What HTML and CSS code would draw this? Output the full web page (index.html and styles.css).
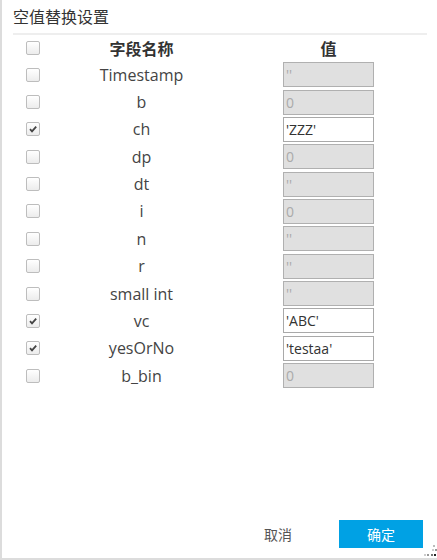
FILE: index.html
```html
<!DOCTYPE html>
<html lang="zh">
<head>
<meta charset="utf-8">
<title>空值替换设置</title>
<link rel="stylesheet" href="styles.css">
</head>
<body>
<div class="dialog">
  <div class="title">空值替换设置</div>
  <div class="table">
    <div class="row head">
      <span class="cb"></span>
      <span class="name">字段名称</span>
      <span class="name">值</span>
    </div>
    <div class="row"><span class="cb"></span><span class="name">Timestamp</span><input class="val" value="''" disabled></div>
    <div class="row"><span class="cb"></span><span class="name">b</span><input class="val" value="0" disabled></div>
    <div class="row"><span class="cb on"><svg viewBox="0 0 12 12"><path d="M3 6.2 L5 8.3 L9.2 3.6" /></svg></span><span class="name">ch</span><input class="val" value="'ZZZ'"></div>
    <div class="row"><span class="cb"></span><span class="name">dp</span><input class="val" value="0" disabled></div>
    <div class="row"><span class="cb"></span><span class="name">dt</span><input class="val" value="''" disabled></div>
    <div class="row"><span class="cb"></span><span class="name">i</span><input class="val" value="0" disabled></div>
    <div class="row"><span class="cb"></span><span class="name">n</span><input class="val" value="''" disabled></div>
    <div class="row"><span class="cb"></span><span class="name">r</span><input class="val" value="''" disabled></div>
    <div class="row"><span class="cb"></span><span class="name">small int</span><input class="val" value="''" disabled></div>
    <div class="row"><span class="cb on"><svg viewBox="0 0 12 12"><path d="M3 6.2 L5 8.3 L9.2 3.6" /></svg></span><span class="name">vc</span><input class="val" value="'ABC'"></div>
    <div class="row"><span class="cb on"><svg viewBox="0 0 12 12"><path d="M3 6.2 L5 8.3 L9.2 3.6" /></svg></span><span class="name">yesOrNo</span><input class="val" value="'testaa'"></div>
    <div class="row"><span class="cb"></span><span class="name">b_bin</span><input class="val" value="0" disabled></div>
  </div>
  <div class="footer">
    <button class="btn cancel">取消</button>
    <button class="btn ok">确定</button>
  </div>
  <svg class="grip" viewBox="0 0 14 14" width="14" height="14">
    <rect x="10" y="1" width="2" height="2" fill="#bbb"/>
    <rect x="9" y="5" width="2" height="2" fill="#ccc"/>
    <rect x="12" y="5" width="2" height="2" fill="#999"/>
    <rect x="1" y="10" width="2" height="2" fill="#ccc"/>
    <rect x="4" y="10" width="2" height="2" fill="#999"/>
    <rect x="8" y="10" width="2" height="2" fill="#777"/>
    <rect x="11" y="10" width="2" height="2" fill="#222"/>
  </svg>
</div>
</body>
</html>
```

FILE: styles.css
```css
html, body {
  margin: 0;
  padding: 0;
  background: #fff;
}
body {
  font-family: "Open Sans", "Noto Sans CJK SC", sans-serif;
  color: #444;
}
.dialog {
  position: relative;
  box-sizing: border-box;
  height: 560px;
  width: 437px;
  border-left: 2px solid #dcdcdc;
  border-bottom: 2px solid #dcdcdc;
  padding: 0 10px 0 11px;
  display: flex;
  flex-direction: column;
}
.title {
  height: 33px;
  line-height: 33px;
  font-size: 16px;
  color: #333;
  font-family: "Noto Sans CJK SC", sans-serif;
  border-bottom: 2px solid #eeeeee;
}
.table {
  flex: 1;
}
.row {
  display: grid;
  grid-template-columns: 40px 177px 197px;
  height: 27.36px;
  align-items: center;
  justify-items: center;
}
.row.head {
  height: 26px;
}
.name {
  font-size: 16px;
  line-height: 20px;
  color: #444;
  white-space: nowrap;
}
.head .name {
  font-weight: bold;
  color: #333;
  font-family: "Noto Sans CJK SC", sans-serif;
}
.cb {
  box-sizing: border-box;
  width: 14px;
  height: 14px;
  border: 1px solid #bdbdbd;
  border-radius: 2px;
  background: linear-gradient(#ffffff, #ececec);
  display: flex;
  align-items: center;
  justify-content: center;
}
.cb svg {
  width: 12px;
  height: 12px;
}
.cb svg path {
  fill: none;
  stroke: #444;
  stroke-width: 1.8;
}
.val {
  box-sizing: border-box;
  width: 91px;
  height: 25px;
  margin: 0;
  padding: 0 2px;
  border: 1px solid #a9a9a9;
  background: #fff;
  font-family: "Open Sans", sans-serif;
  font-size: 14px;
  color: #333;
  outline: none;
}
.val:disabled {
  background: #e0e0e0;
  color: #aaa;
  border-color: #b0b0b0;
}
.footer {
  display: flex;
  justify-content: flex-end;
  padding: 0 4px 10px 0;
}
.btn {
  box-sizing: border-box;
  width: 84px;
  height: 28px;
  border: none;
  padding: 0;
  font-family: "Noto Sans CJK SC", sans-serif;
  font-size: 14px;
  cursor: pointer;
}
.cancel {
  background: transparent;
  color: #555;
  margin-right: 19px;
}
.ok {
  background: #00a1e4;
  color: #fff;
}
.grip {
  position: absolute;
  right: 0;
  bottom: 0;
}
```
